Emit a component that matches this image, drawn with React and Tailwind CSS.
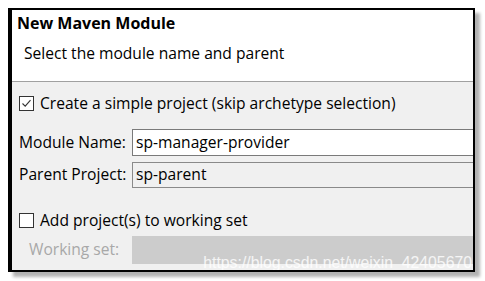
import React from "react";

function Check({ checked }) {
  return (
    <div className="w-[15px] h-[15px] border border-[#333333] bg-white flex items-center justify-center shrink-0">
      {checked && (
        <svg width="11" height="11" viewBox="0 0 11 11">
          <path d="M1.5 5.5 L4.2 8.2 L9.5 2.2" fill="none" stroke="#333333" strokeWidth="1.1" />
        </svg>
      )}
    </div>
  );
}

export default function App() {
  return (
    <div
      className="w-[485px] h-[281px] bg-white pl-2 pt-2 overflow-hidden relative"
      style={{ fontFamily: '"Open Sans", "Noto Sans", sans-serif' }}
    >
      <div className="w-[467px] h-[264px] border-l-4 border-t-2 border-r-2 border-b-2 border-black flex flex-col shadow-[5px_5px_3px_rgba(0,0,0,0.3)] overflow-hidden relative text-black">
        <div className="h-[72px] bg-white border-b border-[#a0a0a0] shrink-0">
          <div className="pl-[5px] pt-[2px] text-[16px] font-bold leading-[22px]">New Maven Module</div>
          <div className="pl-[12px] pt-[8px] text-[15.6px] leading-[22px]">Select the module name and parent</div>
        </div>
        <div className="flex-1 bg-[#f0f0f0] flex flex-col pl-[7px] text-[15.6px]">
          <div className="flex items-center gap-[6px] mt-[13px] h-[17px]">
            <Check checked />
            <span>Create a simple project (skip archetype selection)</span>
          </div>
          <div className="flex items-center mt-[17px] h-[27px]">
            <span className="w-[113px] shrink-0">Module Name:</span>
            <div className="flex-1 h-[27px] bg-white border border-[#7a7a7a] pl-[3px] flex items-center mr-[-4px]">
              sp-manager-provider
            </div>
          </div>
          <div className="flex items-center mt-[6px] h-[26px]">
            <span className="w-[113px] shrink-0">Parent Project:</span>
            <div className="flex-1 h-[26px] bg-[#f0f0f0] border border-[#8a8a8a] pl-[3px] flex items-center mr-[-4px]">
              sp-parent
            </div>
          </div>
          <div className="flex items-center gap-[6px] mt-[24px] h-[17px]">
            <Check />
            <span>Add project(s) to working set</span>
          </div>
          <div className="flex items-center mt-[7px] h-[28px]">
            <span className="w-[113px] shrink-0 pl-[10px] text-[#a8a8a8]">Working set:</span>
            <div className="flex-1 h-[28px] bg-[#cccccc] mr-[-4px]"></div>
          </div>
        </div>
        <div
          className="absolute right-[1px] bottom-[-2px] text-[15.8px] leading-[18px] text-white/80"
          style={{ fontFamily: '"Liberation Sans", Arial, sans-serif' }}
        >
          https://blog.csdn.net/weixin_42405670
        </div>
      </div>
    </div>
  );
}
